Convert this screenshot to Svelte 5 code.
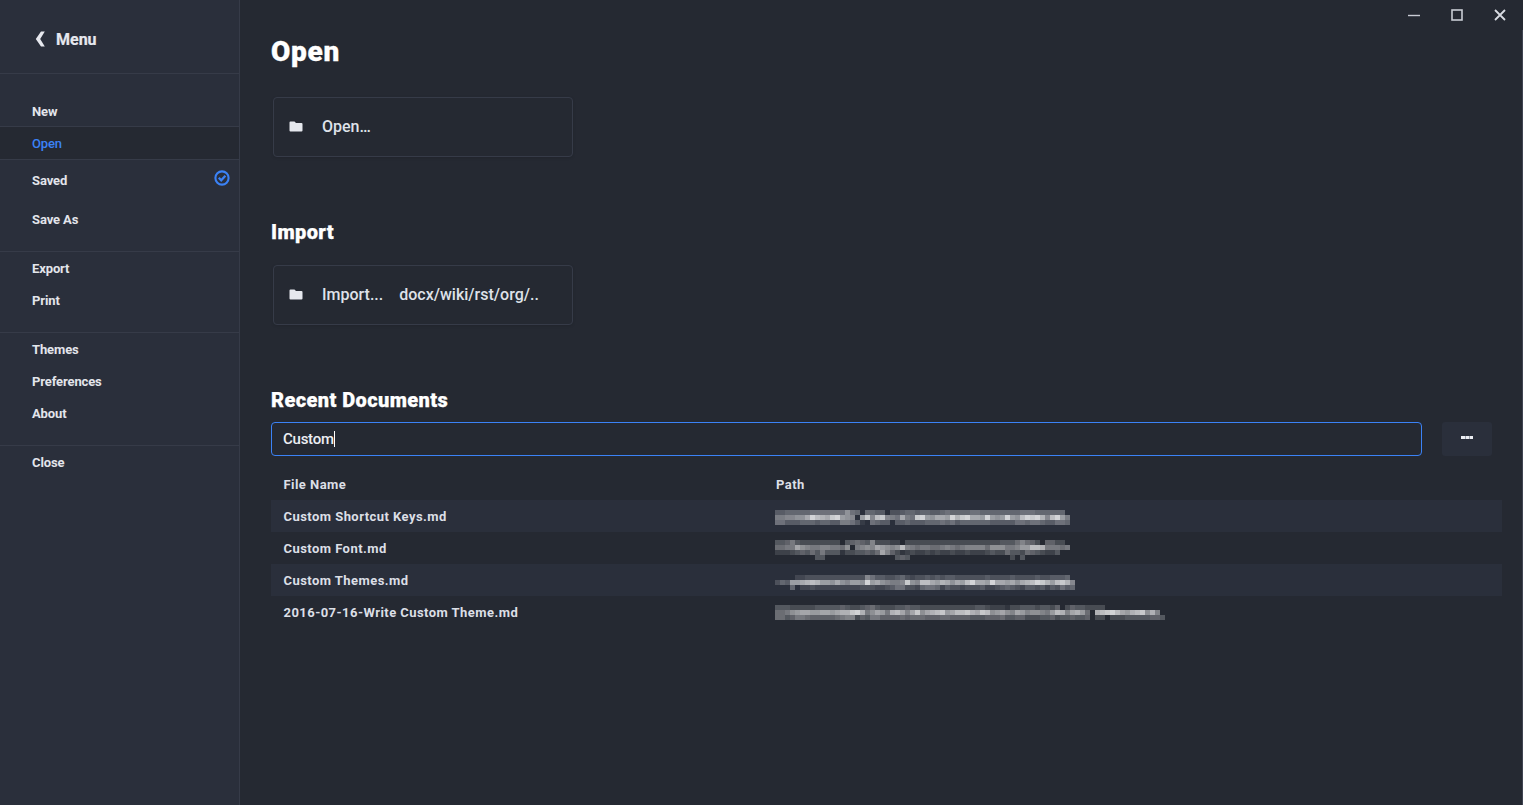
<script lang="ts">
  const groups = [
    { items: [{ label: 'New' }, { label: 'Open', active: true }, { label: 'Saved', saved: true }, { label: 'Save As', tall: true }] },
    { items: [{ label: 'Export' }, { label: 'Print' }] },
    { items: [{ label: 'Themes' }, { label: 'Preferences' }, { label: 'About' }] },
    { items: [{ label: 'Close' }] }
  ];

  // blurred paths, one hex digit per 5px mosaic cell, "." is empty
  const recent = [
    {
      name: 'Custom Shortcut Keys.md',
      top: 10,
      blur: [
        '33444445555555854.4433.22344344334544445544444444555444444',
        '667788aecbade987.9d7cd765a65de98aa9ebdeaa9e989e98cedeb7ce96',
        '553334443443366530.5433.33433344454534444443333355455433554'
      ]
    },
    {
      name: 'Custom Font.md',
      top: 8,
      blur: [
        '3346322222222.34543722211.222222222222222222233357542.4422',
        '5566a8766776658.6787a9878c7656655676567777588866799ccb66656',
        '111234353633302233435a74201211212112112111232253325432113',
        '........33..............343....................2.3'
      ]
    },
    {
      name: 'Custom Themes.md',
      top: 11,
      blur: [
        '....1122222222222275332234212232323322222232222322223223334',
        '24399abcb998a87998e9a87667d87cca9ba8a9ceaa9eaa9a8abcedb9cdb7',
        '...4.1121111111112221123552214554132212223112343213323132534'
      ]
    },
    {
      name: '2016-07-16-Write Custom Theme.md',
      top: 9,
      blur: [
        '333222223333343223453222334332222222222233211102233323324.24332222',
        '55689aa99aa9abbdeb68a96bca7ad8abcd9accdbadc89a87a9788769cb7ab95.bcdeca9bcd8b7',
        '553466544444567724366444454555444554444333444533442223342334334.22.22233333443'
      ]
    }
  ];

  const cell = 5;
  const alpha = (ch: string) => 0.06 + parseInt(ch, 16) / 19;
</script>

<div class="app">
  <aside class="sidebar">
    <div class="menu-head">
      <svg class="back" width="11" height="16" viewBox="0 0 11 16"><path d="M9.8 0.5 L5.2 8 L9.8 15.5 H6 L0.8 8 L6 0.5 Z" fill="#e6e8ee"/></svg>
      <span>Menu</span>
    </div>
    {#each groups as group}
      <ul class="group">
        {#each group.items as item}
          <li class:active={item.active} class:tall={item.tall} class:saved={item.saved}>
            {item.label}
            {#if item.saved}
              <svg class="check" width="16" height="16" viewBox="0 0 16 16" fill="none" stroke="#3b82f6">
                <circle cx="8" cy="8" r="6.6" stroke-width="2.1"/>
                <path d="M4.8 7.8 L7.2 10.3 L11.4 5.8" stroke-width="2.3"/>
              </svg>
            {/if}
          </li>
        {/each}
      </ul>
    {/each}
  </aside>

  <main class="content">
    <h1>Open</h1>
    <div class="action">
      <svg class="folder" width="14" height="11" viewBox="0 0 14 11"><path d="M1.5 0.5 H5.5 L7 2 H12.5 A1 1 0 0 1 13.5 3 V9.5 A1 1 0 0 1 12.5 10.5 H1.5 A1 1 0 0 1 0.5 9.5 V1.5 A1 1 0 0 1 1.5 0.5 Z" fill="#e6e8ee"/></svg>
      <span>Open…</span>
    </div>

    <h2 class="import-title">Import</h2>
    <div class="action">
      <svg class="folder" width="14" height="11" viewBox="0 0 14 11"><path d="M1.5 0.5 H5.5 L7 2 H12.5 A1 1 0 0 1 13.5 3 V9.5 A1 1 0 0 1 12.5 10.5 H1.5 A1 1 0 0 1 0.5 9.5 V1.5 A1 1 0 0 1 1.5 0.5 Z" fill="#e6e8ee"/></svg>
      <span>Import...</span>
      <span class="formats">docx/wiki/rst/org/..</span>
    </div>

    <h2 class="recent-title">Recent Documents</h2>
    <div class="search-row">
      <div class="search" role="textbox">Custom<span class="caret"></span></div>
      <button type="button" class="more" aria-label="More">
        <svg width="12" height="3" viewBox="0 0 12 3"><rect width="12" height="3" fill="#eceef3"/><rect x="4" width="1" height="3" fill="#9aa0ad"/><rect x="8" width="1" height="3" fill="#9aa0ad"/></svg>
      </button>
    </div>

    <div class="table">
      <div class="row head"><div class="name">File Name</div><div class="path">Path</div></div>
      {#each recent as doc}
        <div class="row">
          <div class="name">{doc.name}</div>
          <div class="path">
            <svg width="400" height="32" viewBox="0 0 400 32">
              {#each doc.blur as line, y}
                {#each line.split('') as ch, x}
                  {#if ch !== '.'}
                    <rect x={x * cell} y={y * cell + doc.top} width={cell} height={cell} fill="#fff" fill-opacity={alpha(ch)}/>
                  {/if}
                {/each}
              {/each}
            </svg>
          </div>
        </div>
      {/each}
    </div>
  </main>

  <div class="window-controls">
    <svg width="12" height="12" viewBox="0 0 12 12"><path d="M0 6.5 H12" stroke="#c9ccd4" stroke-width="1.4"/></svg>
    <svg width="12" height="12" viewBox="0 0 12 12" fill="none"><rect x="1" y="1" width="10" height="10" stroke="#c9ccd4" stroke-width="1.6"/></svg>
    <svg width="12" height="12" viewBox="0 0 12 12"><path d="M1 1 L11 11 M11 1 L1 11" stroke="#d8dbe2" stroke-width="1.8"/></svg>
  </div>
  <div class="edge"></div>
</div>

<style>
  :global(body) { background:#252932; }
  .app { display:flex; height:805px; overflow:hidden; position:relative; background:#252932; color:#e6e8ee; font-family:Roboto, "Liberation Sans", sans-serif; }

  .sidebar { width:239px; flex:none; background:#2a2f3b; border-right:1px solid #363b48; }
  .menu-head { height:68px; display:flex; align-items:center; padding:5px 0 0 35px; gap:10px; border-bottom:1px solid #363b48; font-size:16px; font-weight:700; -webkit-text-stroke:.2px; }
  .group { list-style:none; margin:0; padding:0 0 16px; border-bottom:1px solid #363b48; }
  .group:first-of-type { padding:21px 0 13px; }
  .group:last-child { border-bottom:0; }
  .group li { display:flex; align-items:center; justify-content:space-between; height:32px; padding:0 9px 0 32px; font-size:13px; font-weight:700; letter-spacing:-.12px; color:#e3e5eb; }
  .group li.saved { height:40px; }
  .group li.tall { height:38px; }
  .group li.active { background:#252932; color:#3b82f6; font-weight:500; border-top:1px solid #363b48; border-bottom:1px solid #363b48; margin-top:-1px; }
  .check { position:relative; top:-2px; }

  .content { flex:1; min-width:0; padding:32px 21px 0 31px; }
  h1 { margin:0 0 25px; font-size:28px; line-height:40px; font-weight:900; letter-spacing:.7px; -webkit-text-stroke:.3px; color:#fff; }
  h2 { margin:0; font-size:20px; line-height:24px; font-weight:900; letter-spacing:.4px; -webkit-text-stroke:.25px; color:#fff; }
  .import-title { margin:63px 0 21px; }
  .recent-title { margin:63px 0 10px; }

  .action { display:flex; align-items:center; width:283px; height:57px; margin-left:2px; padding:0 0 1px 15px; border:1px solid #363b48; border-radius:4px; font-size:16px; font-weight:500; color:#dfe2e9; box-shadow:0 1px 3px rgba(0,0,0,.12); }
  .folder { margin-right:19px; }
  .formats { margin-left:16px; }

  .search-row { display:flex; gap:20px; padding-right:10px; }
  .search { flex:1; height:32px; display:flex; align-items:center; padding-left:11px; border:1px solid #3b82f6; border-radius:4px; font-size:15px; font-weight:500; letter-spacing:-.25px; color:#eceef3; }
  .caret { width:1px; height:16px; background:#fff; }
  .more { width:50px; height:34px; display:flex; align-items:center; justify-content:center; padding:0 0 3px; border:0; border-radius:3px; background:#2a2f3b; }

  .table { margin-top:12px; }
  .row { display:flex; height:32px; align-items:center; font-size:13px; font-weight:700; letter-spacing:.45px; color:#dcdfe6; }
  .row:nth-child(even) { background:#2a2f3b; }
  .name { width:492px; padding-left:12.5px; }
  .path { flex:1; display:flex; align-items:center; padding-left:.5px; }
  .path svg { margin-left:-1px; }
  .head { background:none; }

  .window-controls { position:absolute; top:9px; right:17px; display:flex; gap:31px; }
  .edge { position:absolute; top:30px; right:0; bottom:0; width:1px; background:#3f4451; }
</style>
